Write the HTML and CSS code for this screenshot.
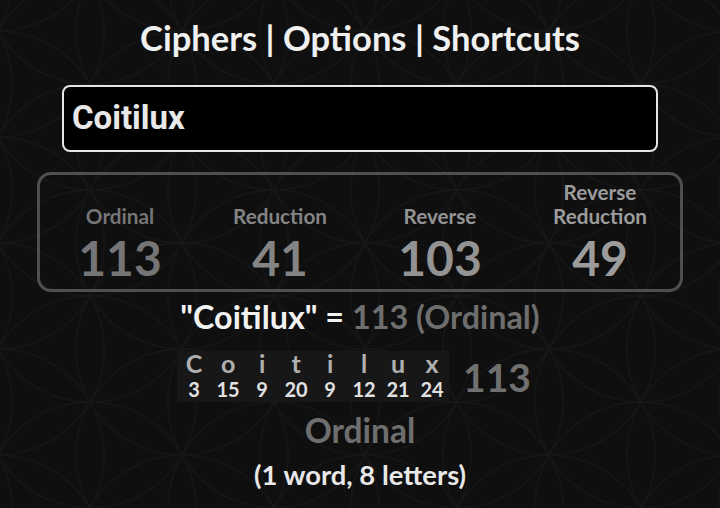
FILE: index.html
```html
<!DOCTYPE html>
<html lang="en">
<head>
<meta charset="utf-8">
<title>Gematria</title>
<link rel="stylesheet" href="styles.css">
</head>
<body>
<main class="page">
  <nav class="menu">Ciphers | Options | Shortcuts</nav>
  <input class="phrase" type="text" value="Coitilux">
  <section class="ciphers">
    <div class="cipher c1"><span class="label">Ordinal</span><span class="value">113</span></div>
    <div class="cipher c2"><span class="label">Reduction</span><span class="value">41</span></div>
    <div class="cipher c3"><span class="label">Reverse</span><span class="value">103</span></div>
    <div class="cipher c4"><span class="label">Reverse<br>Reduction</span><span class="value">49</span></div>
  </section>
  <p class="result"><span class="quote">"Coitilux" =</span> <span class="dim">113 (Ordinal)</span></p>
  <div class="breakdown">
    <div class="letters">
      <div class="cell"><span class="ch">C</span><span class="num">3</span></div>
      <div class="cell"><span class="ch">o</span><span class="num">15</span></div>
      <div class="cell"><span class="ch">i</span><span class="num">9</span></div>
      <div class="cell"><span class="ch">t</span><span class="num">20</span></div>
      <div class="cell"><span class="ch">i</span><span class="num">9</span></div>
      <div class="cell"><span class="ch">l</span><span class="num">12</span></div>
      <div class="cell"><span class="ch">u</span><span class="num">21</span></div>
      <div class="cell"><span class="ch">x</span><span class="num">24</span></div>
    </div>
    <span class="total">113</span>
  </div>
  <p class="cipher-name">Ordinal</p>
  <p class="count">(1 word, 8 letters)</p>
</main>
</body>
</html>
```
FILE: styles.css
```css
html, body {
  margin: 0;
  padding: 0;
  height: 100%;
}
body {
  background-color: #0f0f0f;
  background-image: url("data:image/svg+xml,%3Csvg xmlns='http://www.w3.org/2000/svg' width='183.6' height='106' viewBox='0 0 183.6 106'%3E%3Cg fill='none' stroke='%23161616' stroke-width='1.3'%3E%3Ccircle cx='0' cy='-106' r='106'/%3E%3Ccircle cx='0' cy='0' r='106'/%3E%3Ccircle cx='0' cy='106' r='106'/%3E%3Ccircle cx='0' cy='212' r='106'/%3E%3Ccircle cx='183.6' cy='-106' r='106'/%3E%3Ccircle cx='183.6' cy='0' r='106'/%3E%3Ccircle cx='183.6' cy='106' r='106'/%3E%3Ccircle cx='183.6' cy='212' r='106'/%3E%3Ccircle cx='91.8' cy='-159' r='106'/%3E%3Ccircle cx='91.8' cy='-53' r='106'/%3E%3Ccircle cx='91.8' cy='53' r='106'/%3E%3Ccircle cx='91.8' cy='159' r='106'/%3E%3Ccircle cx='-91.8' cy='-53' r='106'/%3E%3Ccircle cx='-91.8' cy='53' r='106'/%3E%3Ccircle cx='-91.8' cy='159' r='106'/%3E%3Ccircle cx='275.4' cy='-53' r='106'/%3E%3Ccircle cx='275.4' cy='53' r='106'/%3E%3Ccircle cx='275.4' cy='159' r='106'/%3E%3C/g%3E%3C/svg%3E");
  background-size: 183.6px 106px;
  background-position: 90px 84px;
  font-family: Lato, "Open Sans", sans-serif;
  color: #eeeeee;
  overflow: hidden;
}
.page {
  display: flex;
  flex-direction: column;
  align-items: center;
  padding-top: 17px;
}
.menu {
  font-size: 34.5px;
  font-weight: 700;
  line-height: 41px;
  color: #f0f0f0;
}
.phrase {
  margin-top: 27px;
  box-sizing: border-box;
  width: 596px;
  height: 67px;
  border: 2px solid #e6e6e6;
  border-radius: 8px;
  background: #000;
  color: #e8e8e8;
  font-family: Roboto, "Liberation Sans", sans-serif;
  font-weight: 700;
  font-size: 33px;
  padding: 0 0 2px 8px;
  outline: none;
}
.ciphers {
  margin-top: 20px;
  box-sizing: border-box;
  width: 646px;
  height: 120px;
  border: 3px solid #4f4f4f;
  border-radius: 14px;
  display: grid;
  grid-template-columns: repeat(4, 1fr);
  padding: 3px 0 0;
}
.cipher {
  display: flex;
  flex-direction: column;
  justify-content: flex-end;
  align-items: center;
  text-align: center;
  padding-bottom: 7px;
}
.label {
  font-size: 20.7px;
  font-weight: 700;
  line-height: 24px;
}
.value {
  font-size: 48px;
  font-weight: 700;
  line-height: 48px;
  margin-top: 6px;
}
.c1 { color: #757575; }
.c2 { color: #848484; }
.c3 { color: #939393; }
.c4 { color: #9c9c9c; }
.result {
  margin: 6px 0 0;
  font-size: 32.3px;
  font-weight: 700;
  line-height: 38px;
}
.quote { color: #f2f2f2; }
.dim { color: #6e6e6e; }
.breakdown {
  margin-top: 15px;
  display: flex;
  align-items: center;
  gap: 14px;
  margin-left: -12px;
}
.letters {
  display: flex;
  background: #171717;
}
.cell {
  width: 34px;
  display: flex;
  flex-direction: column;
  align-items: center;
}
.ch {
  font-size: 25px;
  font-weight: 700;
  line-height: 25px;
  color: #b0b0b0;
}
.num {
  font-size: 20px;
  font-weight: 700;
  line-height: 26px;
  color: #e0e0e0;
}
.total {
  font-size: 39px;
  font-weight: 700;
  color: #707070;
  line-height: 46px;
}
.cipher-name {
  margin: 9px 0 0;
  font-size: 33.5px;
  font-weight: 700;
  line-height: 38px;
  color: #6e6e6e;
}
.count {
  margin: 10px 0 0;
  font-size: 27.4px;
  font-weight: 700;
  line-height: 32px;
  color: #e8e8e8;
}
```
